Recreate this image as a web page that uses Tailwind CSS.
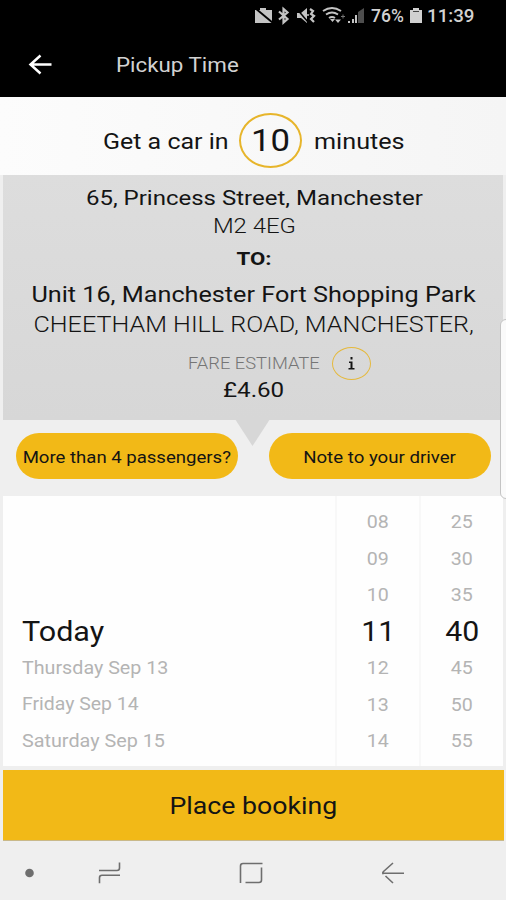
<!DOCTYPE html>
<html lang="en">
<head>
<meta charset="utf-8">
<title>Pickup Time</title>
<script src="https://cdn.jsdelivr.net/npm/@tailwindcss/browser@4"></script>
</head>
<body class="bg-[#efefef] font-['Roboto',sans-serif]">
<main class="relative flex h-[900px] w-[506px] flex-col overflow-hidden bg-[#efefef] whitespace-nowrap text-[#141414]">
  <header class="h-[97px] shrink-0 bg-black text-[#d2d2d2]">
    <div class="flex h-8 items-center pl-[254px]">
      <svg class="h-8 w-[117px] shrink-0" viewBox="254 0 117 32" fill="#c4c4c4">
        <path d="M255 10h5V8h6v2h6v13h-17z"/>
        <path d="M255 8l18 15" stroke="#000" stroke-width="1.800"/>
        <path d="M279 11.500l8.500 7.500-4 3.500V9l4 3.500-8.500 7" fill="none" stroke="#c4c4c4" stroke-width="2.200"/>
        <path d="M297 13h4l6-5v15l-6-5h-4z"/>
        <path d="M296 8l12 14" stroke="#000" stroke-width="1.500"/>
        <path d="M310 9l3 2-2 3 3 2-3 3 3 3" fill="none" stroke="#c4c4c4" stroke-width="2.200"/>
        <path d="M307 15h2" stroke="#c4c4c4" stroke-width="1.500"/>
        <path d="M323 11q9-6 18 0M326 14.500q6-4 12 0M329 18q3-2 6 0" fill="none" stroke="#c4c4c4" stroke-width="2"/>
        <path d="M330 19l2.500 3 2.500-3zM335 19.500h6l-3 3.500z"/><path d="M341 16.500h4M343 14.500v4" stroke="#777" stroke-width="1"/>
        <path d="M348 23v-2h2v2zM352 23v-4h2v4z"/><path d="M355 23v-8h2v8z"/><path d="M358 23V12l6-4v15z" opacity=".4"/>
      </svg>
      <span class="w-[36px] text-[17.500px] font-medium"><span class="inline-block origin-left">76%</span></span>
      <svg class="ml-[3px] h-8 w-[13px] shrink-0" viewBox="0 0 13 32" fill="#d0d0d0"><path d="M3 8h6v2h3v13H0V10h3z"/><path d="M3 11.500h6" stroke="#444"/></svg>
      <span class="ml-1 text-[17.500px] font-medium"><span class="inline-block origin-left scale-x-[1.07]">11:39</span></span>
    </div>
    <div class="flex h-[65px] items-center pl-7">
      <svg class="h-6 w-6" viewBox="0 0 24 24" fill="none" stroke="#fff" stroke-width="2.500"><path d="M23.500 11.500H2.500M12.500 2.500L2.500 11.500 12.500 20.500"/></svg>
      <span class="ml-16 inline-block origin-left scale-x-[1.09] pt-px text-[20.500px]">Pickup Time</span>
    </div>
  </header>
  <section class="flex h-[78px] shrink-0 items-center bg-linear-to-r from-[#fcfcfc] to-[#f5f5f5] pt-[8px] pl-[103px]">
    <span class="w-[136px] pt-[2px] text-[22px]"><span class="inline-block origin-left scale-x-[1.135]">Get a car in</span></span>
    <span class="flex h-[55px] w-[63px] items-center justify-center rounded-[50%] border-2 border-[#e7b52b] pt-[2px] text-[31px]"><span class="inline-block scale-x-[1.12]">10</span></span>
    <span class="ml-3 inline-block origin-left scale-x-[1.145] pt-[2px] text-[22px]">minutes</span>
  </section>
  <section class="relative mx-[3px] flex h-[245px] shrink-0 flex-col items-center bg-linear-to-b from-[#dddddd] via-[#dadada] to-[#d7d7d7] pt-[9px] pl-[2px]">
    <p class="h-7 text-[20px] leading-7"><span class="inline-block scale-x-[1.2]">65, Princess Street, Manchester</span></p>
    <p class="h-7 text-[21px] leading-7 font-light"><span class="inline-block scale-x-[1.14]">M2 4EG</span></p>
    <p class="h-9 text-[19px] leading-[37px] font-bold"><span class="inline-block scale-x-[1.17]">TO:</span></p>
    <p class="h-8 text-[21.500px] leading-[37px]"><span class="inline-block scale-x-[1.172]">Unit 16, Manchester Fort Shopping Park</span></p>
    <p class="h-8 text-[22px] leading-[33px] font-light"><span class="inline-block scale-x-[1.143]">CHEETHAM HILL ROAD, MANCHESTER,</span></p>
    <div class="mt-[6px] flex h-[34px] items-center self-stretch pl-[183px]">
      <span class="w-[144px] pt-[2px] text-[17px] font-light text-[#757575]"><span class="inline-block origin-left scale-x-[1.078]">FARE ESTIMATE</span></span>
      <span class="flex h-[33px] w-[39px] items-center justify-center rounded-[50%] border-[1.500px] border-[#e5b93c]">
        <svg class="h-[13px] w-[7px]" viewBox="0 0 7 13" fill="#141414"><path d="M2.500 0h2v2.500h-2zM1 4.500h3.500V11H6.500v1.500h-6V11h2V6H1z"/></svg>
      </span>
    </div>
    <p class="h-7 text-[21px] leading-[21px]"><span class="inline-block scale-x-[1.15]">£4.60</span></p>
    <svg class="absolute top-[244px] left-[232px] h-7 w-[35px]" viewBox="0 0 35 28" fill="#d7d7d7"><path d="M0 0h35L17.500 27z"/></svg>
  </section>
  <div class="flex h-[76px] shrink-0 gap-[31px] pt-[13px] pl-[16px] text-[16px]">
    <button class="flex h-[46px] w-[222px] items-center justify-center rounded-full bg-[#f2b917] pt-[3px]"><span class="inline-block scale-x-[1.16]">More than 4 passengers?</span></button>
    <button class="flex h-[46px] w-[222px] items-center justify-center rounded-full bg-[#f2b917] pt-[3px]"><span class="inline-block scale-x-[1.165]">Note to your driver</span></button>
  </div>
  <section class="mx-[3px] grid h-[270px] shrink-0 grid-cols-[332px_84px_84px] bg-[#fefefe] text-[17.500px] text-[#b4b4b4]">
    <ul class="grid auto-rows-[36.500px] items-center pt-[117px] pl-[19px]">
      <li class="pt-[2px] text-[27px] leading-9 text-[#141414]"><span class="inline-block origin-left scale-x-[1.13]">Today</span></li>
      <li><span class="inline-block origin-left scale-x-[1.125]">Thursday Sep 13</span></li>
      <li><span class="inline-block origin-left scale-x-[1.11]">Friday Sep 14</span></li>
      <li><span class="inline-block origin-left scale-x-[1.13]">Saturday Sep 15</span></li>
    </ul>
    <ul class="grid auto-rows-[36.500px] items-center justify-items-center border-l-2 border-[#f8f8f8] pt-[8px]">
      <li class="scale-x-[1.12]">08</li>
      <li class="scale-x-[1.12]">09</li>
      <li class="scale-x-[1.12]">10</li>
      <li class="scale-x-[1.12] text-[27px] text-[#141414]">11</li>
      <li class="scale-x-[1.12]">12</li>
      <li class="scale-x-[1.12]">13</li>
      <li class="scale-x-[1.12]">14</li>
    </ul>
    <ul class="grid auto-rows-[36.500px] items-center justify-items-center border-l-2 border-[#f8f8f8] pt-[8px]">
      <li class="scale-x-[1.12]">25</li>
      <li class="scale-x-[1.12]">30</li>
      <li class="scale-x-[1.12]">35</li>
      <li class="scale-x-[1.12] text-[27px] text-[#141414]">40</li>
      <li class="scale-x-[1.12]">45</li>
      <li class="scale-x-[1.12]">50</li>
      <li class="scale-x-[1.12]">55</li>
    </ul>
  </section>
  <button class="mt-1 mr-[2px] ml-[3px] flex h-[71px] shrink-0 items-center justify-center border-b border-[#c9b98a] bg-[#f2b917] pt-[4px] text-[23px]"><span class="inline-block scale-x-[1.16]">Place booking</span></button>
  <nav class="h-[59px] shrink-0">
    <svg class="h-[59px] w-[506px]" viewBox="0 841 506 59" fill="none" stroke="#6e6e6e" stroke-width="1.600">
      <circle cx="29.500" cy="873" r="4.300" fill="#6e6e6e" stroke="none"/>
      <path d="M99 870.500h18q2.500 0 2.500-2.500v-5.500M120 875.300h-18q-2.500 0-2.500 2.500v5.500"/>
      <path d="M240.500 883v-17q0-2.500 2.500-2.500h19.500M261.500 867.500v12.500q0 2.500-2.500 2.500h-13.500"/>
      <path d="M404 873.300h-20.500M393 863l-9.500 8.500q-1.500 1.500 0 2.500M385.500 876l7.500 7"/>
    </svg>
  </nav>
  <div class="absolute top-[319px] left-[500px] h-[180px] w-3 rounded-md border border-[#c4c4c4] bg-[#fafafa]"></div>
</main>
</body>
</html>
